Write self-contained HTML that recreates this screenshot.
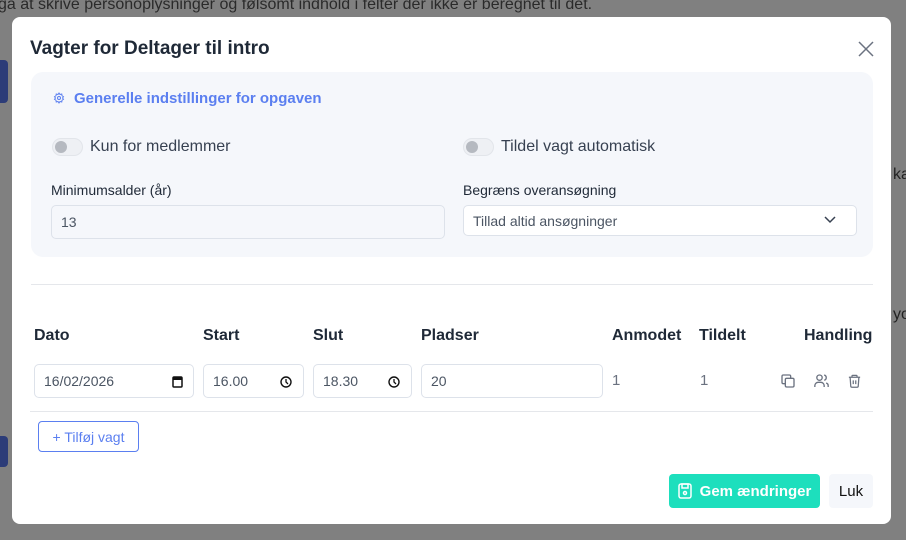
<!DOCTYPE html>
<html><head><meta charset="utf-8"><style>
*{box-sizing:border-box;margin:0;padding:0}
body{width:906px;height:540px;overflow:hidden;background:#808080;font-family:"Liberation Sans",sans-serif;position:relative;color:#1f2937}
.abs{position:absolute}
.modal{position:absolute;left:12px;top:17px;width:879px;height:507px;background:#fff;border-radius:8px}
.panel{position:absolute;left:19px;top:55px;width:842px;height:185px;background:#f5f7fb;border-radius:12px}
.tog{position:absolute;width:31px;height:18px;border-radius:9px;background:#eef0f4;border:1px solid #e2e5ea}
.tog:after{content:"";position:absolute;left:2px;top:2px;width:12px;height:12px;border-radius:50%;background:#b5b9c0}
.lbl{position:absolute;font-size:16px;color:#374151}
.inp{position:absolute;border:1px solid #dde2ea;border-radius:5px;font-size:14px;color:#4b5563;padding-left:9px;display:flex;align-items:center;background:#fff}
.th{position:absolute;font-size:16px;font-weight:bold;color:#1f2937}
</style></head><body>
<div class="abs" style="left:-2px;top:-4px;font-size:16px;color:#2a2a2a">gå at skrive personoplysninger og følsomt indhold i felter der ikke er beregnet til det.</div>
<div class="abs" style="left:0;top:60px;width:8px;height:43px;background:#2c3c78;border-radius:0 4px 4px 0"></div>
<div class="abs" style="left:0;top:436px;width:8px;height:31px;background:#2c3c78;border-radius:0 4px 4px 0"></div>
<div class="abs" style="left:893px;top:166px;font-size:16px;color:#222">ka</div>
<div class="abs" style="left:893px;top:306px;font-size:16px;color:#222">yo</div>
<div class="modal">
<div class="abs" style="left:18px;top:21px;font-size:19px;font-weight:bold;color:#1f2937">Vagter for Deltager til intro</div>
<svg class="abs" style="left:846px;top:24px" width="16" height="16" viewBox="0 0 16 16"><path d="M1 1L15 15M15 1L1 15" stroke="#6b7280" stroke-width="1.5"/></svg>
<div class="panel">
<svg class="abs" style="left:22px;top:20px" width="12" height="12" viewBox="0 0 24 24" fill="none" stroke="#5b7ff0" stroke-width="2"><circle cx="12" cy="12" r="3"/><path d="M12 2l2 3 3.5-1 .5 3.5 3 2-2 2.5 2 2.5-3 2-.5 3.5-3.5-1-2 3-2-3-3.5 1-.5-3.5-3-2 2-2.5-2-2.5 3-2 .5-3.5 3.5 1z"/></svg>
<div class="abs" style="left:43px;top:18px;font-size:15px;color:#5b7ff0;font-weight:bold">Generelle indstillinger for opgaven</div>
<div class="tog" style="left:21px;top:66px"></div>
<div class="lbl" style="left:59px;top:66px">Kun for medlemmer</div>
<div class="tog" style="left:432px;top:66px"></div>
<div class="lbl" style="left:470px;top:66px">Tildel vagt automatisk</div>
<div class="abs" style="left:20px;top:110px;font-size:14px;color:#1f2937">Minimumsalder (år)</div>
<div class="abs" style="left:432px;top:110px;font-size:14px;color:#1f2937">Begræns overansøgning</div>
<div class="inp" style="left:20px;top:133px;width:394px;height:34px;background:#f5f7fb">13</div>
<div class="inp" style="left:432px;top:133px;width:394px;height:31px">Tillad altid ansøgninger
<svg class="abs" style="right:20px;top:10px" width="12" height="8" viewBox="0 0 12 8"><path d="M1 1l5 5 5-5" stroke="#374151" stroke-width="1.5" fill="none"/></svg></div>
</div>
<div class="abs" style="left:19px;top:267px;width:842px;height:1px;background:#e5e7eb"></div>
<div class="th" style="left:22px;top:310px">Dato</div>
<div class="th" style="left:191px;top:310px">Start</div>
<div class="th" style="left:301px;top:310px">Slut</div>
<div class="th" style="left:409px;top:310px">Pladser</div>
<div class="th" style="left:600px;top:310px">Anmodet</div>
<div class="th" style="left:687px;top:310px">Tildelt</div>
<div class="th" style="left:792px;top:310px">Handling</div>
<div class="inp" style="left:22px;top:347px;width:160px;height:34px">16/02/2026
<svg class="abs" style="right:10px;top:10px" width="11" height="13" viewBox="0 0 11 13"><rect x="1" y="2" width="9" height="10" rx="1" fill="none" stroke="#111" stroke-width="1.5"/><rect x="1" y="2" width="9" height="3" fill="#111"/></svg></div>
<div class="inp" style="left:191px;top:347px;width:101px;height:34px">16.00
<svg class="abs" style="right:11px;top:11px" width="12" height="12" viewBox="0 0 12 12"><circle cx="6" cy="6" r="5" fill="none" stroke="#111" stroke-width="1.4"/><path d="M6 3v3l2 2" stroke="#111" stroke-width="1.3" fill="none"/></svg></div>
<div class="inp" style="left:301px;top:347px;width:99px;height:34px">18.30
<svg class="abs" style="right:11px;top:11px" width="12" height="12" viewBox="0 0 12 12"><circle cx="6" cy="6" r="5" fill="none" stroke="#111" stroke-width="1.4"/><path d="M6 3v3l2 2" stroke="#111" stroke-width="1.3" fill="none"/></svg></div>
<div class="inp" style="left:409px;top:347px;width:182px;height:34px">20</div>
<div class="abs" style="left:600px;top:355px;font-size:15px;color:#6b7280">1</div>
<div class="abs" style="left:688px;top:355px;font-size:15px;color:#6b7280">1</div>
<svg class="abs" style="left:768px;top:356px" width="16" height="16" viewBox="0 0 24 24" fill="none" stroke="#6b7280" stroke-width="2"><rect x="8" y="8" width="13" height="13" rx="2"/><path d="M16 8V5a2 2 0 0 0-2-2H5a2 2 0 0 0-2 2v9a2 2 0 0 0 2 2h3"/></svg>
<svg class="abs" style="left:801px;top:356px" width="17" height="16" viewBox="0 0 24 24" fill="none" stroke="#6b7280" stroke-width="2"><circle cx="9" cy="7" r="4"/><path d="M2 21v-2a5 5 0 0 1 5-5h4a5 5 0 0 1 5 5v2M16 3.1a4 4 0 0 1 0 7.8M22 21v-2a4 4 0 0 0-3-3.9"/></svg>
<svg class="abs" style="left:835px;top:356px" width="15" height="16" viewBox="0 0 24 24" fill="none" stroke="#6b7280" stroke-width="2"><path d="M3 6h18M8 6V4a1 1 0 0 1 1-1h6a1 1 0 0 1 1 1v2M5 6l1 14a2 2 0 0 0 2 2h8a2 2 0 0 0 2-2l1-14M10 11v6M14 11v6"/></svg>
<div class="abs" style="left:18px;top:394px;width:843px;height:1px;background:#e5e7eb"></div>
<div class="abs" style="left:26px;top:404px;width:101px;height:31px;border:1px solid #5b7ff0;border-radius:4px;color:#5b7ff0;font-size:14px;display:flex;align-items:center;justify-content:center">+ Tilføj vagt</div>
<div class="abs" style="left:657px;top:457px;width:151px;height:34px;background:#1ddfbd;border-radius:4px;color:#fff;font-size:15px;font-weight:bold;display:flex;align-items:center;justify-content:center;gap:8px">
<svg width="14" height="16" viewBox="0 0 14 16" fill="none" stroke="#fff" stroke-width="1.5"><rect x="1" y="1" width="12" height="14" rx="2"/><rect x="4" y="1" width="6" height="4"/><circle cx="7" cy="10" r="1.5"/></svg>Gem ændringer</div>
<div class="abs" style="left:817px;top:457px;width:44px;height:34px;background:#f5f7fb;border-radius:4px;font-size:15px;color:#111;display:flex;align-items:center;justify-content:center">Luk</div>
</div>
</body></html>
